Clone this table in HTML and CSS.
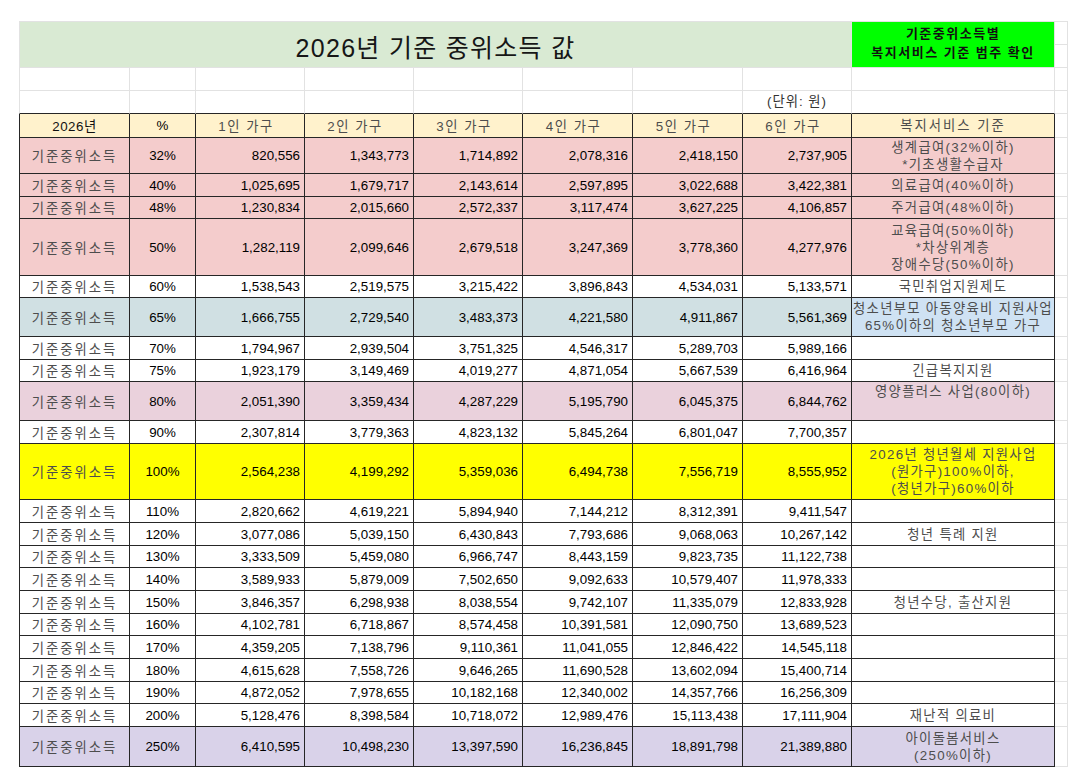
FILE: index.html
```html
<!DOCTYPE html>
<html lang="ko">
<head>
<meta charset="utf-8">
<title>2026년 기준 중위소득 값</title>
<link rel="stylesheet" href="styles.css">
</head>
<body>
<div class="sheet">
  <div class="top">
    <div class="c a title">2026년 기준 중위소득 값</div>
    <div class="c badge">기준중위소득별<br>복지서비스 기준 범주 확인</div>
    <div class="c j r1"></div>
    <div class="c j r2"></div>
  </div>

  <div class="row h23">
    <div class="c a"></div><div class="c"></div><div class="c"></div><div class="c"></div><div class="c"></div><div class="c"></div><div class="c"></div><div class="c"></div><div class="c"></div><div class="c j"></div>
  </div>
  <div class="row h23 unit">
    <div class="c a u"></div><div class="c u"></div><div class="c u"></div><div class="c u"></div><div class="c u"></div><div class="c u"></div><div class="c u"></div><div class="c u note">(단위: 원)</div><div class="c u"></div><div class="c j"></div>
  </div>

  <div class="row h24 head">
    <div class="c t a hk">2026년</div>
    <div class="c t">%</div>
    <div class="c t hk hd">1인 가구</div>
    <div class="c t hk hd">2인 가구</div>
    <div class="c t hk hd">3인 가구</div>
    <div class="c t hk hd">4인 가구</div>
    <div class="c t hk hd">5인 가구</div>
    <div class="c t hk hd">6인 가구</div>
    <div class="c t hk svch">복지서비스 기준</div>
    <div class="c j"></div>
  </div>

  <div class="row h36 pink">
    <div class="c t a ko">기준중위소득</div><div class="c t">32%</div>
    <div class="c t n">820,556</div><div class="c t n">1,343,773</div><div class="c t n">1,714,892</div><div class="c t n">2,078,316</div><div class="c t n">2,418,150</div><div class="c t n">2,737,905</div>
    <div class="c t svc">생계급여(32%이하)<br>*기초생활수급자</div><div class="c j"></div>
  </div>
  <div class="row h23 pink">
    <div class="c t a ko">기준중위소득</div><div class="c t">40%</div>
    <div class="c t n">1,025,695</div><div class="c t n">1,679,717</div><div class="c t n">2,143,614</div><div class="c t n">2,597,895</div><div class="c t n">3,022,688</div><div class="c t n">3,422,381</div>
    <div class="c t svc">의료급여(40%이하)</div><div class="c j"></div>
  </div>
  <div class="row h22 pink">
    <div class="c t a ko">기준중위소득</div><div class="c t">48%</div>
    <div class="c t n">1,230,834</div><div class="c t n">2,015,660</div><div class="c t n">2,572,337</div><div class="c t n">3,117,474</div><div class="c t n">3,627,225</div><div class="c t n">4,106,857</div>
    <div class="c t svc">주거급여(48%이하)</div><div class="c j"></div>
  </div>
  <div class="row h57 pink">
    <div class="c t a ko">기준중위소득</div><div class="c t">50%</div>
    <div class="c t n">1,282,119</div><div class="c t n">2,099,646</div><div class="c t n">2,679,518</div><div class="c t n">3,247,369</div><div class="c t n">3,778,360</div><div class="c t n">4,277,976</div>
    <div class="c t svc">교육급여(50%이하)<br>*차상위계층<br>장애수당(50%이하)</div><div class="c j"></div>
  </div>
  <div class="row h22">
    <div class="c t a ko">기준중위소득</div><div class="c t">60%</div>
    <div class="c t n">1,538,543</div><div class="c t n">2,519,575</div><div class="c t n">3,215,422</div><div class="c t n">3,896,843</div><div class="c t n">4,534,031</div><div class="c t n">5,133,571</div>
    <div class="c t svc">국민취업지원제도</div><div class="c j"></div>
  </div>
  <div class="row h39 teal">
    <div class="c t a ko">기준중위소득</div><div class="c t">65%</div>
    <div class="c t n">1,666,755</div><div class="c t n">2,729,540</div><div class="c t n">3,483,373</div><div class="c t n">4,221,580</div><div class="c t n">4,911,867</div><div class="c t n">5,561,369</div>
    <div class="c t svc">청소년부모 아동양육비 지원사업<br>65%이하의 청소년부모 가구</div><div class="c j"></div>
  </div>
  <div class="row h23">
    <div class="c t a ko">기준중위소득</div><div class="c t">70%</div>
    <div class="c t n">1,794,967</div><div class="c t n">2,939,504</div><div class="c t n">3,751,325</div><div class="c t n">4,546,317</div><div class="c t n">5,289,703</div><div class="c t n">5,989,166</div>
    <div class="c t svc"></div><div class="c j"></div>
  </div>
  <div class="row h22">
    <div class="c t a ko">기준중위소득</div><div class="c t">75%</div>
    <div class="c t n">1,923,179</div><div class="c t n">3,149,469</div><div class="c t n">4,019,277</div><div class="c t n">4,871,054</div><div class="c t n">5,667,539</div><div class="c t n">6,416,964</div>
    <div class="c t svc">긴급복지지원</div><div class="c j"></div>
  </div>
  <div class="row h39 mauve">
    <div class="c t a ko">기준중위소득</div><div class="c t">80%</div>
    <div class="c t n">2,051,390</div><div class="c t n">3,359,434</div><div class="c t n">4,287,229</div><div class="c t n">5,195,790</div><div class="c t n">6,045,375</div><div class="c t n">6,844,762</div>
    <div class="c t svc topal">영양플러스 사업(80이하)</div><div class="c j"></div>
  </div>
  <div class="row h23">
    <div class="c t a ko">기준중위소득</div><div class="c t">90%</div>
    <div class="c t n">2,307,814</div><div class="c t n">3,779,363</div><div class="c t n">4,823,132</div><div class="c t n">5,845,264</div><div class="c t n">6,801,047</div><div class="c t n">7,700,357</div>
    <div class="c t svc"></div><div class="c j"></div>
  </div>
  <div class="row h56 yellow">
    <div class="c t a ko">기준중위소득</div><div class="c t">100%</div>
    <div class="c t n">2,564,238</div><div class="c t n">4,199,292</div><div class="c t n">5,359,036</div><div class="c t n">6,494,738</div><div class="c t n">7,556,719</div><div class="c t n">8,555,952</div>
    <div class="c t svc">2026년 청년월세 지원사업<br>(원가구)100%이하,<br>(청년가구)60%이하</div><div class="c j"></div>
  </div>
  <div class="row h23">
    <div class="c t a ko">기준중위소득</div><div class="c t">110%</div>
    <div class="c t n">2,820,662</div><div class="c t n">4,619,221</div><div class="c t n">5,894,940</div><div class="c t n">7,144,212</div><div class="c t n">8,312,391</div><div class="c t n">9,411,547</div>
    <div class="c t svc"></div><div class="c j"></div>
  </div>
  <div class="row h23">
    <div class="c t a ko">기준중위소득</div><div class="c t">120%</div>
    <div class="c t n">3,077,086</div><div class="c t n">5,039,150</div><div class="c t n">6,430,843</div><div class="c t n">7,793,686</div><div class="c t n">9,068,063</div><div class="c t n">10,267,142</div>
    <div class="c t svc">청년 특례 지원</div><div class="c j"></div>
  </div>
  <div class="row h22">
    <div class="c t a ko">기준중위소득</div><div class="c t">130%</div>
    <div class="c t n">3,333,509</div><div class="c t n">5,459,080</div><div class="c t n">6,966,747</div><div class="c t n">8,443,159</div><div class="c t n">9,823,735</div><div class="c t n">11,122,738</div>
    <div class="c t svc"></div><div class="c j"></div>
  </div>
  <div class="row h23">
    <div class="c t a ko">기준중위소득</div><div class="c t">140%</div>
    <div class="c t n">3,589,933</div><div class="c t n">5,879,009</div><div class="c t n">7,502,650</div><div class="c t n">9,092,633</div><div class="c t n">10,579,407</div><div class="c t n">11,978,333</div>
    <div class="c t svc"></div><div class="c j"></div>
  </div>
  <div class="row h23">
    <div class="c t a ko">기준중위소득</div><div class="c t">150%</div>
    <div class="c t n">3,846,357</div><div class="c t n">6,298,938</div><div class="c t n">8,038,554</div><div class="c t n">9,742,107</div><div class="c t n">11,335,079</div><div class="c t n">12,833,928</div>
    <div class="c t svc">청년수당, 출산지원</div><div class="c j"></div>
  </div>
  <div class="row h22">
    <div class="c t a ko">기준중위소득</div><div class="c t">160%</div>
    <div class="c t n">4,102,781</div><div class="c t n">6,718,867</div><div class="c t n">8,574,458</div><div class="c t n">10,391,581</div><div class="c t n">12,090,750</div><div class="c t n">13,689,523</div>
    <div class="c t svc"></div><div class="c j"></div>
  </div>
  <div class="row h23">
    <div class="c t a ko">기준중위소득</div><div class="c t">170%</div>
    <div class="c t n">4,359,205</div><div class="c t n">7,138,796</div><div class="c t n">9,110,361</div><div class="c t n">11,041,055</div><div class="c t n">12,846,422</div><div class="c t n">14,545,118</div>
    <div class="c t svc"></div><div class="c j"></div>
  </div>
  <div class="row h23">
    <div class="c t a ko">기준중위소득</div><div class="c t">180%</div>
    <div class="c t n">4,615,628</div><div class="c t n">7,558,726</div><div class="c t n">9,646,265</div><div class="c t n">11,690,528</div><div class="c t n">13,602,094</div><div class="c t n">15,400,714</div>
    <div class="c t svc"></div><div class="c j"></div>
  </div>
  <div class="row h22">
    <div class="c t a ko">기준중위소득</div><div class="c t">190%</div>
    <div class="c t n">4,872,052</div><div class="c t n">7,978,655</div><div class="c t n">10,182,168</div><div class="c t n">12,340,002</div><div class="c t n">14,357,766</div><div class="c t n">16,256,309</div>
    <div class="c t svc"></div><div class="c j"></div>
  </div>
  <div class="row h23">
    <div class="c t a ko">기준중위소득</div><div class="c t">200%</div>
    <div class="c t n">5,128,476</div><div class="c t n">8,398,584</div><div class="c t n">10,718,072</div><div class="c t n">12,989,476</div><div class="c t n">15,113,438</div><div class="c t n">17,111,904</div>
    <div class="c t svc">재난적 의료비</div><div class="c j"></div>
  </div>
  <div class="row h40 lav">
    <div class="c t a ko">기준중위소득</div><div class="c t">250%</div>
    <div class="c t n">6,410,595</div><div class="c t n">10,498,230</div><div class="c t n">13,397,590</div><div class="c t n">16,236,845</div><div class="c t n">18,891,798</div><div class="c t n">21,389,880</div>
    <div class="c t svc">아이돌봄서비스<br>(250%이하)</div><div class="c j"></div>
  </div>
</div>
</body>
</html>
```

FILE: styles.css
```css
html, body {
  margin: 0;
  padding: 0;
  background: #ffffff;
}

body {
  width: 1068px;
  height: 780px;
  overflow: hidden;
  font-family: "Liberation Sans", "Noto Sans CJK KR", sans-serif;
  font-size: 13.33px;
  color: #000000;
}

.sheet {
  --cols: 111px 66px 109px 109px 109px 110px 110px 109px 203px 1fr;
  margin: 21px 0 0 19px;
  width: 1049px;
}

.top {
  display: grid;
  grid-template-columns: var(--cols);
  grid-template-rows: 23px 23px;
  border-top: 1px solid #e2e2e2;
}

.row {
  display: grid;
  grid-template-columns: var(--cols);
}

.h22 { height: 22px; }
.h23 { height: 23px; }
.h24 { height: 24px; }
.h36 { height: 36px; }
.h39 { height: 39px; }
.h40 { height: 40px; }
.h56 { height: 56px; }
.h57 { height: 57px; }

.c {
  box-sizing: border-box;
  min-width: 0;
  border-right: 1px solid #e2e2e2;
  border-bottom: 1px solid #e2e2e2;
  display: flex;
  align-items: center;
  justify-content: center;
  white-space: nowrap;
}

.a {
  border-left: 1px solid #e2e2e2;
}

.t {
  border-right-color: #262626;
  border-bottom-color: #262626;
}

.t.a {
  border-left-color: #262626;
}

.unit > .u {
  border-bottom-color: #262626;
}

.title {
  grid-column: 1 / 9;
  grid-row: 1 / 3;
  background: #d9ead3;
  font-size: 25px;
  letter-spacing: 1.3px;
  color: #161616;
  padding-top: 2px;
}

.badge {
  grid-column: 9;
  grid-row: 1 / 3;
  background: #00ff00;
  font-weight: bold;
  font-size: 13px;
  letter-spacing: 1.5px;
  line-height: 19px;
  text-align: center;
  color: #111111;
  padding-bottom: 4px;
}

.top .r1 { grid-column: 10; grid-row: 1; }
.top .r2 { grid-column: 10; grid-row: 2; }

.note {
  color: #333333;
  letter-spacing: 1px;
  padding-bottom: 3px;
}

.ko {
  letter-spacing: 2px;
  color: #4d4d4d;
}

.hk {
  letter-spacing: 1.5px;
  color: #4d4d4d;
  padding-bottom: 1px;
}

.head > .t:first-child { color: #111111; letter-spacing: 0.5px; }

.hd {
  padding-right: 8px;
}

.n {
  justify-content: flex-end;
  padding-right: 4px;
}

.svc,
.svch {
  text-align: center;
  line-height: 17px;
  letter-spacing: 1.3px;
  color: #4d4d4d;
}

.svch {
  letter-spacing: 2px;
}

.topal {
  align-items: flex-start;
  padding-top: 1px;
}

.head > .t { background: #fff2cc; }

.pink > .t { background: #f4cccc; }
.teal > .t { background: #d0e0e3; }
.teal > .t.svc { background: #cfe2f3; }
.mauve > .t { background: #ead1dc; }
.yellow > .t { background: #ffff00; }
.lav > .t { background: #d9d2e9; }
```
